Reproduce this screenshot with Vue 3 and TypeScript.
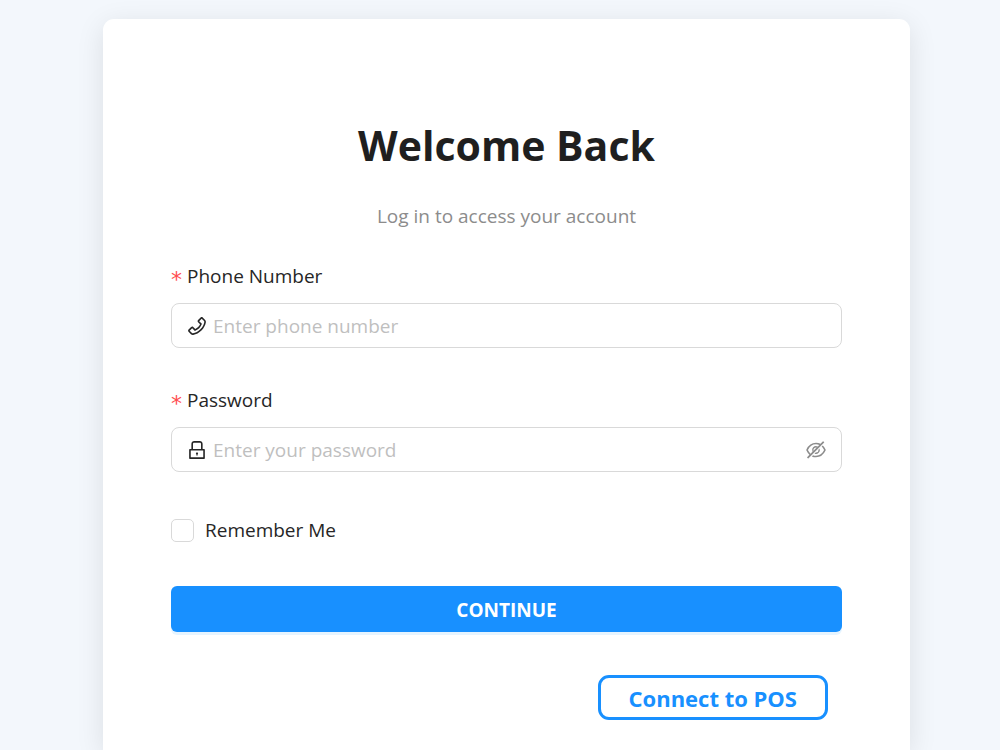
<script setup lang="ts">
import { ref } from 'vue'

const phone = ref('')
const password = ref('')
const remember = ref(false)
const visible = ref(false)
</script>

<template>
  <main class="page">
    <section class="card">
      <h1>Welcome Back</h1>
      <p class="subtitle">Log in to access your account</p>
      <form @submit.prevent>
        <div class="field">
          <label class="label" for="phone"><span class="star" aria-hidden="true">*</span>Phone Number</label>
          <div class="control">
            <svg class="icon" viewBox="64 64 896 896" aria-hidden="true">
              <path d="M877.1 238.7L770.6 132.3c-13-13-30.4-20.3-48.8-20.3s-35.8 7.2-48.8 20.3L558.3 246.8c-13 13-20.3 30.5-20.3 48.9 0 18.5 7.2 35.8 20.3 48.9l89.6 89.7a405.46 405.46 0 01-86.4 127.3c-36.7 36.9-79.6 66-127.2 86.6l-89.6-89.7c-13-13-30.4-20.3-48.8-20.3a68.2 68.2 0 00-48.8 20.3L132.3 673c-13 13-20.3 30.5-20.3 48.9 0 18.5 7.2 35.8 20.3 48.9l106.4 106.4c22.2 22.2 52.8 34.9 84.2 34.9 6.5 0 12.8-.5 19.2-1.6 132.4-21.8 263.8-92.3 369.9-198.3C818 606 888.4 474.6 910.4 342.1c6.3-37.6-6.3-76.3-33.3-103.4zm-37.6 91.5c-19.5 117.9-82.9 235.5-178.4 331s-213 158.9-330.9 178.4c-14.8 2.5-30-2.5-40.8-13.2L184.9 721.9 295.7 611l119.8 120 .9.9 21.6-8a481.29 481.29 0 00285.7-285.8l8-21.6-120.8-120.7 110.8-110.9 104.5 104.5c10.8 10.8 15.8 26 13.3 40.8z" />
            </svg>
            <input id="phone" v-model="phone" type="tel" placeholder="Enter phone number" />
          </div>
        </div>
        <div class="field">
          <label class="label" for="password"><span class="star" aria-hidden="true">*</span>Password</label>
          <div class="control">
            <svg class="icon" viewBox="64 64 896 896" aria-hidden="true">
              <path d="M832 464h-68V240c0-70.7-57.3-128-128-128H388c-70.7 0-128 57.3-128 128v224h-68c-17.7 0-32 14.3-32 32v384c0 17.7 14.3 32 32 32h640c17.7 0 32-14.3 32-32V496c0-17.7-14.3-32-32-32zM332 240c0-30.9 25.1-56 56-56h248c30.9 0 56 25.1 56 56v224H332V240zm460 600H232V536h560v304zM484 701v53c0 4.4 3.6 8 8 8h40c4.4 0 8-3.6 8-8v-53a48.01 48.01 0 10-56 0z" />
            </svg>
            <input id="password" v-model="password" :type="visible ? 'text' : 'password'" placeholder="Enter your password" />
            <button class="toggle" type="button" aria-label="Show password" :aria-pressed="visible" @click="visible = !visible">
              <svg class="icon" viewBox="64 64 896 896" aria-hidden="true">
                <path d="M942.2 486.2Q889.47 375.11 816.7 305l-50.88 50.88C807.31 395.53 843.45 447.4 874.7 512 791.5 684.2 673.4 766 512 766q-72.67 0-133.87-22.38L323 798.75Q408 838 512 838q288.3 0 430.2-300.3a60.29 60.29 0 000-51.5zm-63.57-320.64L836 122.88a8 8 0 00-11.32 0L715.31 232.2Q624.86 186 512 186q-288.3 0-430.2 300.3a60.3 60.3 0 000 51.5q56.69 119.4 136.5 191.41L112.48 835a8 8 0 000 11.31L155.17 889a8 8 0 0011.31 0l712.15-712.12a8 8 0 000-11.32zM149.3 512C232.6 339.8 350.7 258 512 258c54.54 0 104.13 9.36 149.12 28.39l-70.3 70.3a176 176 0 00-238.13 238.13l-83.42 83.42C223.1 637.49 183.3 582.28 149.3 512zm246.7 0a112.11 112.11 0 01146.2-106.69L401.31 546.2A112 112 0 01396 512z" />
                <path d="M508 624c-3.46 0-6.87-.16-10.25-.47l-52.82 52.82a176.09 176.09 0 00227.42-227.42l-52.82 52.82c.31 3.38.47 6.79.47 10.25a111.94 111.94 0 01-112 112z" />
              </svg>
            </button>
          </div>
        </div>
        <label class="remember">
          <input v-model="remember" type="checkbox" />
          <span>Remember Me</span>
        </label>
        <button class="continue" type="submit">CONTINUE</button>
        <div class="extra">
          <button class="pos" type="button">Connect to POS</button>
        </div>
      </form>
    </section>
  </main>
</template>

<style>
body {
  background: #f3f7fc;
}
</style>

<style scoped>
* {
  box-sizing: border-box;
}

.page {
  padding: 19px 90px 0 103px;
  min-height: 100vh;
  display: flex;
  overflow: hidden;
  font-family: "Segoe UI", "Open Sans", "Noto Sans", sans-serif;
  font-size: 19px;
  line-height: 30px;
  color: #262626;
}

.card {
  flex: 1;
  min-width: 0;
  padding: 96px 68px 30px;
  background: #fff;
  border-radius: 11px 11px 0 0;
  box-shadow: 0 6px 28px rgba(0, 0, 0, 0.1);
}

h1 {
  margin: 0;
  font-size: 41px;
  line-height: 60px;
  font-weight: 700;
  text-align: center;
  color: #1f1f1f;
}

.subtitle {
  margin: 26px 0 0;
  text-align: center;
  color: #8c8c8c;
}

form {
  margin-top: 30px;
}

.field {
  margin-bottom: 37px;
}

.label {
  display: flex;
  gap: 6px;
  height: 30px;
  margin-bottom: 12px;
}

.star {
  width: 10px;
  color: #ff4d4f;
  font-family: "DejaVu Sans", sans-serif;
  font-size: 22px;
  line-height: 38px;
}

.control {
  display: flex;
  align-items: center;
  height: 45px;
  padding: 0 15px;
  border: 1px solid #d9d9d9;
  border-radius: 8px;
}

.icon {
  display: block;
  flex: none;
  width: 20px;
  height: 20px;
  fill: currentColor;
}

.control input {
  flex: 1;
  min-width: 0;
  padding: 0;
  margin-left: 6px;
  border: 0;
  outline: 0;
  background: none;
  font: inherit;
  color: inherit;
}

.control input::placeholder {
  color: #bfbfbf;
  opacity: 1;
}

.toggle {
  padding: 0;
  border: 0;
  background: none;
  color: #8c8c8c;
  cursor: pointer;
}

.remember {
  display: flex;
  align-items: center;
  gap: 11px;
  width: fit-content;
  margin-top: 43px;
}

.remember input {
  appearance: none;
  width: 23px;
  height: 23px;
  margin: 0;
  border: 1px solid #d9d9d9;
  border-radius: 5px;
  background: #fff;
}

.remember input:checked {
  background: #1890ff;
  border-color: #1890ff;
}

.continue {
  display: block;
  width: 100%;
  height: 46px;
  margin-top: 41px;
  padding: 2px 0 0;
  border: 0;
  border-radius: 6px;
  background: #1890ff;
  box-shadow: 0 3px 0 rgba(5, 145, 255, 0.1);
  font: inherit;
  font-weight: 700;
  color: #fff;
  cursor: pointer;
}

.extra {
  display: flex;
  justify-content: flex-end;
  margin: 43px 14px 0 0;
}

.pos {
  height: 45px;
  padding: 0 28px;
  border: 3px solid #1890ff;
  border-radius: 11px;
  background: #fff;
  font: inherit;
  font-size: 22px;
  font-weight: 700;
  color: #1890ff;
  cursor: pointer;
}
</style>
